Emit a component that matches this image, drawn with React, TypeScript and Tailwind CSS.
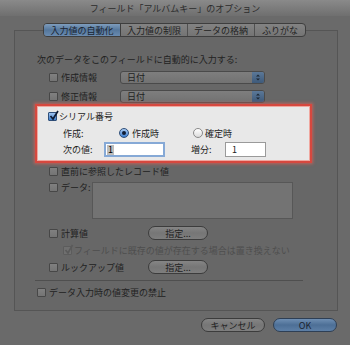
import React from "react";

const font = { fontFamily: '"Noto Sans CJK JP", "Noto Sans", sans-serif' };

function DimCheck({ checked = false, disabled = false }: { checked?: boolean; disabled?: boolean }) {
  return (
    <div
      className={`relative w-[9px] h-[9px] shrink-0 border rounded-[1px] ${
        disabled ? "border-[#5c5c5c] bg-[#6f6f6f]" : "border-[#474747] bg-gradient-to-b from-[#808080] to-[#747474]"
      }`}
    >
      {checked && (
        <svg className="absolute -top-[3px] left-[0px]" width="10" height="11" viewBox="0 0 10 11">
          <path d="M1.5 6 L4 9 L8.5 1" fill="none" stroke={disabled ? "#5a5a5a" : "#333"} strokeWidth="1.6" />
        </svg>
      )}
    </div>
  );
}

function PillButton({ children, w, blue = false }: { children: React.ReactNode; w: string; blue?: boolean }) {
  return (
    <div
      className={`${w} h-[14px] rounded-full border flex items-center justify-center text-[9px] leading-none ${
        blue
          ? "border-[#2e3f55] bg-gradient-to-b from-[#6f8fb3] via-[#4d6f96] to-[#5d7fa6] text-[#1b2430]"
          : "border-[#3c3c3c] bg-gradient-to-b from-[#858585] via-[#767676] to-[#7e7e7e] text-[#222]"
      }`}
    >
      {children}
    </div>
  );
}

function Dropdown() {
  return (
    <div className="ml-auto mr-[72px] w-[145px] h-[13px] rounded-[3px] border border-[#4a4a4a] bg-gradient-to-b from-[#7e7e7e] to-[#727272] flex items-center">
      <span className="pl-[6px] text-[9px] leading-none text-[#222] flex-1">日付</span>
      <div className="w-[12px] h-full rounded-r-[2px] bg-gradient-to-b from-[#5b7898] to-[#3e5a7a] flex items-center justify-center">
        <svg width="6" height="9" viewBox="0 0 6 9">
          <path d="M1 3.5 L3 1.5 L5 3.5 Z M1 5.5 L3 7.5 L5 5.5 Z" fill="#1d2733" />
        </svg>
      </div>
    </div>
  );
}

export default function App() {
  return (
    <div className="w-[350px] h-[345px] bg-[#6a6a6a] flex flex-col overflow-hidden text-[#222]" style={font}>
      {/* title bar */}
      <div className="h-[16px] shrink-0 bg-gradient-to-b from-[#8a8a8a] to-[#6f6f6f] flex items-center justify-center text-[9px] leading-none text-[#2c2c2c]">
        フィールド「アルバムキー」のオプション
      </div>

      {/* group box */}
      <div className="mt-[14px] ml-[14px] w-[324px] h-[281px] border border-[#555] bg-[#676767] flex flex-col">
        {/* tabs */}
        <div className="-mt-[8px] ml-[28px] flex h-[14px] w-[263px] rounded-[4px] border border-[#3e3e3e] overflow-hidden text-[9px] leading-none bg-gradient-to-b from-[#838383] to-[#747474]">
          <div className="w-[77px] flex items-center justify-center bg-gradient-to-b from-[#7e9dbd] via-[#55779c] to-[#6a8bb0] text-[#1a2431] border-r border-[#3e3e3e]">
            入力値の自動化
          </div>
          <div className="w-[67px] flex items-center justify-center border-r border-[#505050]">入力値の制限</div>
          <div className="w-[67px] flex items-center justify-center border-r border-[#505050]">データの格納</div>
          <div className="flex-1 flex items-center justify-center">ふりがな</div>
        </div>

        <div className="ml-[22px] mt-[16px] h-[12px] flex items-center text-[9px] leading-none">
          次のデータをこのフィールドに自動的に入力する:
        </div>

        {/* 作成情報 */}
        <div className="mt-[6px] h-[13px] flex items-center pl-[34px] text-[9px] leading-none">
          <DimCheck />
          <span className="ml-[3px]">作成情報</span>
          <Dropdown />
        </div>
        <div className="mt-[6px] h-[13px] flex items-center pl-[34px] text-[9px] leading-none">
          <DimCheck />
          <span className="ml-[3px]">修正情報</span>
          <Dropdown />
        </div>

        {/* highlighted serial box */}
        <div className="mt-[1px] ml-[20px] w-[277px] h-[59px] border-2 border-[#d6483f] bg-[#e8e8e8] shadow-[inset_0_0_0_1px_#f0a79f,0_0_3px_1px_rgba(225,95,85,0.7)] flex flex-col text-[9px] leading-none text-[#222]">
          <div className="mt-[5px] ml-[11px] h-[10px] flex items-center">
            <div className="relative w-[9px] h-[9px] rounded-[1px] border border-[#2f4f7a] bg-gradient-to-b from-[#9fc3ee] to-[#3f7fcc]">
              <svg className="absolute -top-[3px] left-[0px]" width="11" height="11" viewBox="0 0 11 11">
                <path d="M1.5 6 L4 9 L9 1" fill="none" stroke="#0d1a33" strokeWidth="1.7" />
              </svg>
            </div>
            <span className="ml-[2px]">シリアル番号</span>
          </div>
          <div className="mt-[7px] h-[10px] flex items-center">
            <span className="ml-[26px] w-[56px]">作成:</span>
            <div className="w-[10px] h-[10px] rounded-full border border-[#2f4f7a] bg-gradient-to-b from-[#a9cbf2] to-[#3d7fd0] flex items-center justify-center">
              <div className="w-[4px] h-[4px] rounded-full bg-[#0f1c33]" />
            </div>
            <span className="ml-[3px] w-[61px]">作成時</span>
            <div className="w-[10px] h-[10px] rounded-full border border-[#8a8a8a] bg-gradient-to-b from-[#ffffff] to-[#dcdcdc]" />
            <span className="ml-[2px]">確定時</span>
          </div>
          <div className="mt-[4px] h-[15px] flex items-center">
            <span className="ml-[26px] w-[41px]">次の値:</span>
            <div className="w-[61px] h-[15px] border-2 border-[#86a9d6] bg-white flex items-center pl-[1px]">
              <span className="bg-[#bdbdbd] text-black px-[1px] leading-[10px]">1</span>
            </div>
            <span className="ml-[26px] w-[34px]">増分:</span>
            <div className="w-[41px] h-[15px] border border-[#9a9a9a] bg-white flex items-center pl-[6px]">1</div>
          </div>
        </div>

        {/* 直前に参照したレコード値 */}
        <div className="mt-[2px] h-[12px] flex items-center pl-[34px] text-[9px] leading-none">
          <DimCheck />
          <span className="ml-[3px]">直前に参照したレコード値</span>
        </div>

        {/* データ */}
        <div className="mt-[5px] flex items-start pl-[34px] text-[9px] leading-none">
          <div className="mt-[1px]">
            <DimCheck />
          </div>
          <span className="ml-[3px] mt-[1px] w-[31px]">データ:</span>
          <div className="w-[201px] h-[37px] border border-[#575757] bg-[#737373]" />
        </div>

        {/* 計算値 */}
        <div className="mt-[7px] h-[14px] flex items-center pl-[34px] text-[9px] leading-none">
          <DimCheck />
          <span className="ml-[3px] w-[87px]">計算値</span>
          <PillButton w="w-[60px]">指定...</PillButton>
        </div>

        <div className="mt-[4px] h-[12px] flex items-center pl-[48px] text-[9px] leading-none text-[#4e4e4e]">
          <DimCheck checked disabled />
          <span className="ml-[2px]">フィールドに既存の値が存在する場合は置き換えない</span>
        </div>

        {/* ルックアップ値 */}
        <div className="mt-[4px] h-[14px] flex items-center pl-[34px] text-[9px] leading-none">
          <DimCheck />
          <span className="ml-[3px] w-[87px]">ルックアップ値</span>
          <PillButton w="w-[60px]">指定...</PillButton>
        </div>

        <div className="mt-[6px] ml-[20px] w-[268px] h-px bg-[#4f4f4f]" />

        <div className="mt-[5px] h-[12px] flex items-center pl-[22px] text-[9px] leading-none">
          <DimCheck />
          <span className="ml-[3px]">データ入力時の値変更の禁止</span>
        </div>
      </div>

      {/* bottom buttons */}
      <div className="mt-[7px] pr-[13px] flex justify-end gap-[8px]">
        <PillButton w="w-[64px]">キャンセル</PillButton>
        <PillButton w="w-[64px]" blue>
          OK
        </PillButton>
      </div>
    </div>
  );
}
